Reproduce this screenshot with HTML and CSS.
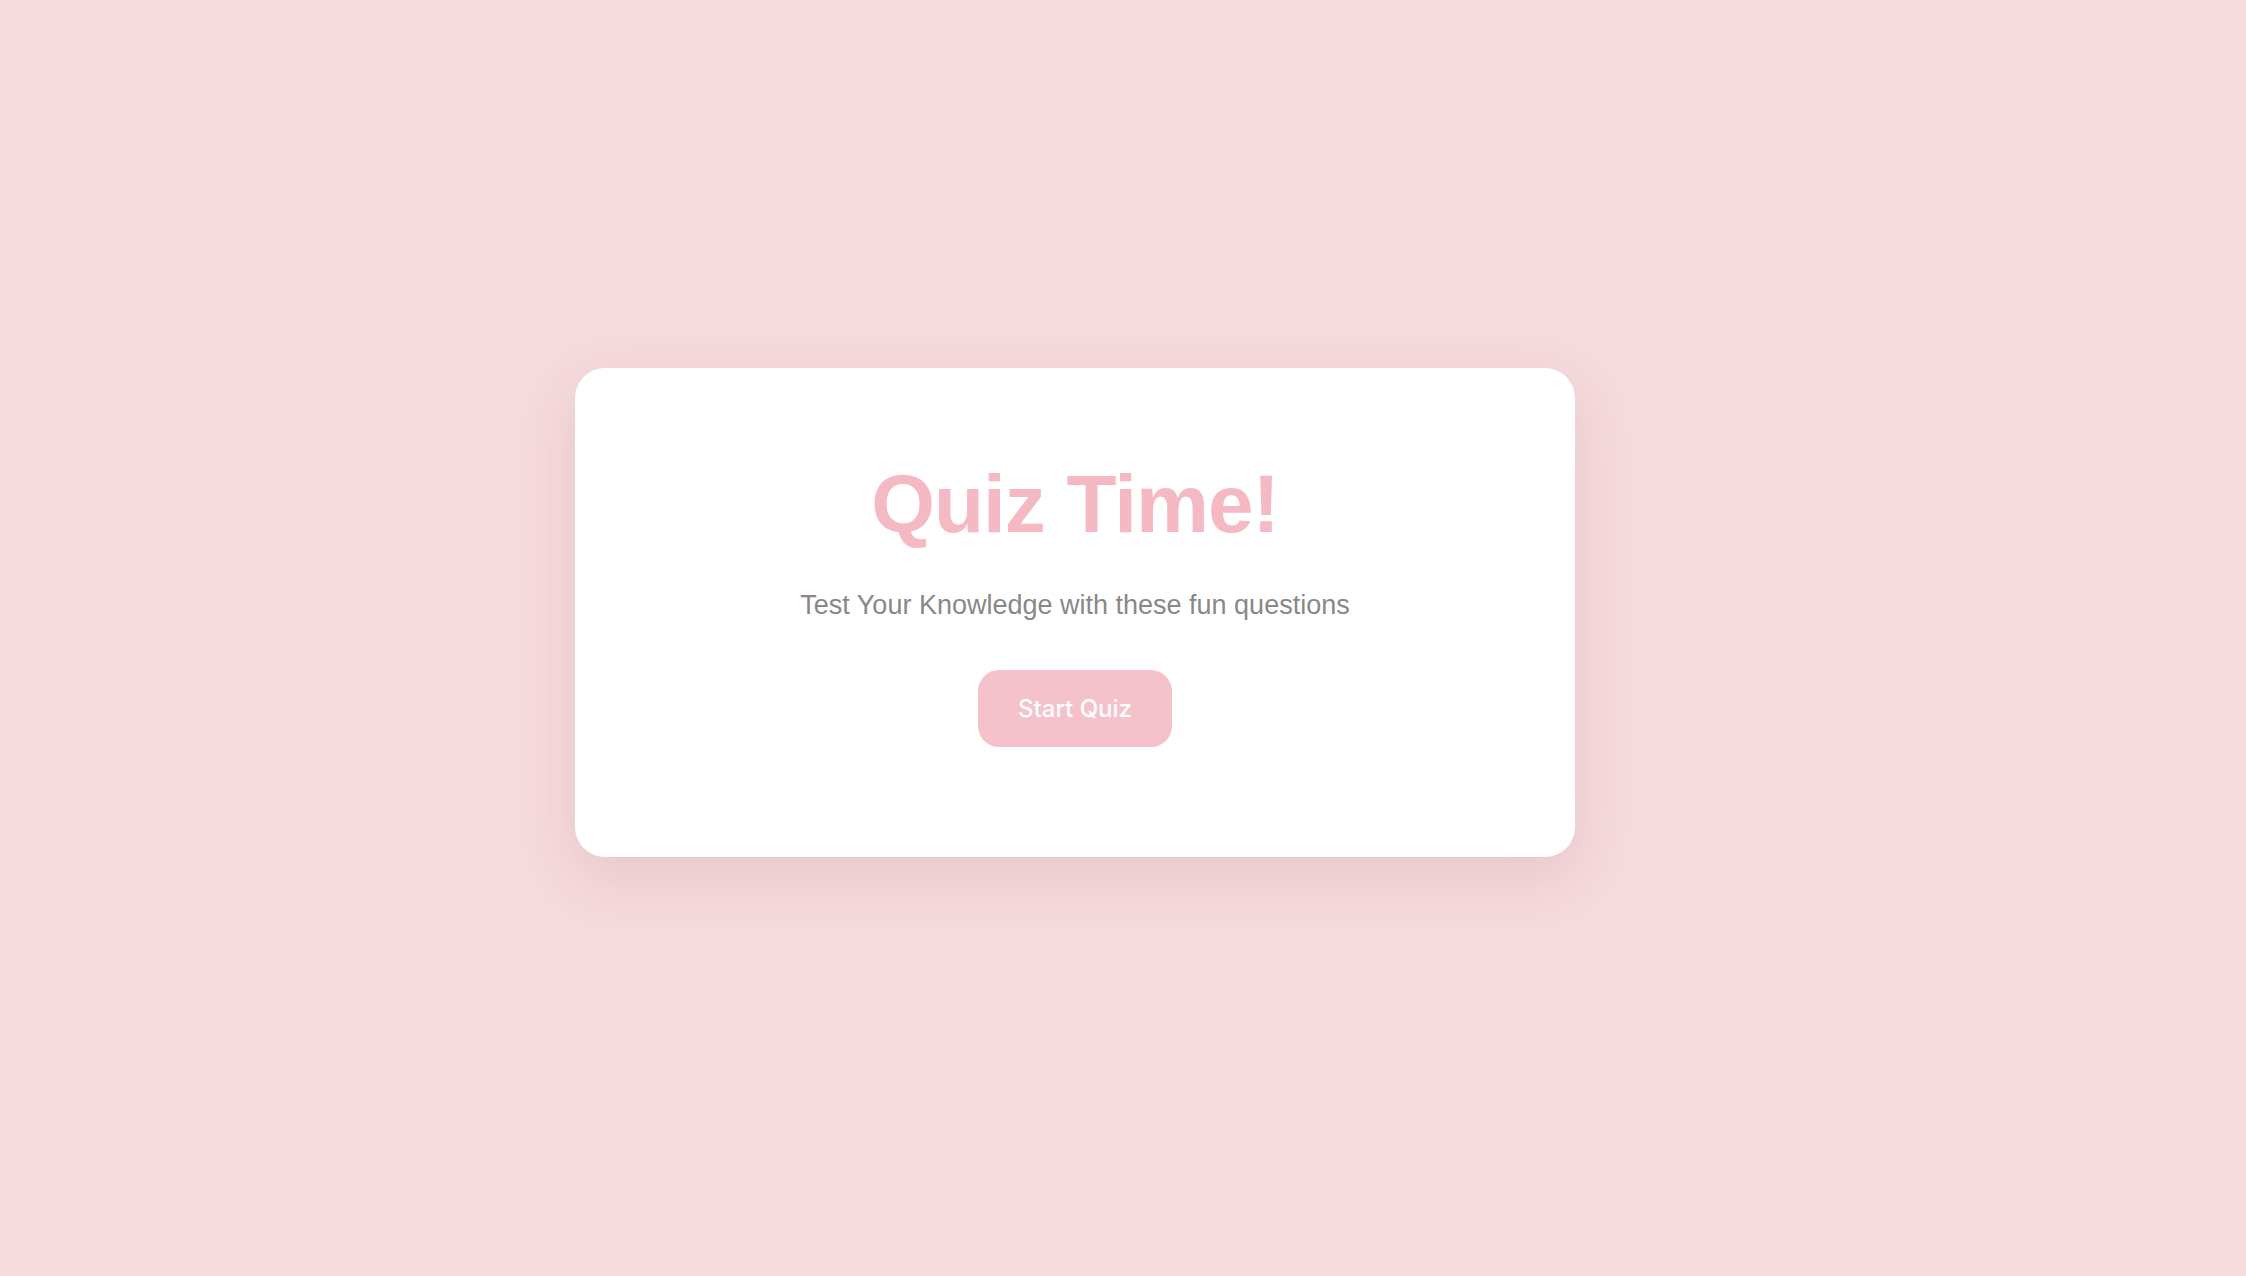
FILE: index.html
```html
<!DOCTYPE html>
<html lang="en">
<head>
<meta charset="utf-8">
<title>Quiz Time!</title>
<link rel="stylesheet" href="styles.css">
</head>
<body>
  <main class="stage">
    <section class="card">
      <h1 class="title">Quiz Time!</h1>
      <p class="subtitle">Test Your Knowledge with these fun questions</p>
      <button class="start-btn" type="button">Start Quiz</button>
    </section>
  </main>
</body>
</html>
```

FILE: styles.css
```css
html, body {
  margin: 0;
  padding: 0;
}

body {
  background: #f6dadd;
  font-family: "Liberation Sans", Arial, Helvetica, sans-serif;
}

.stage {
  box-sizing: border-box;
  min-height: 100vh;
  display: flex;
  align-items: center;
  justify-content: center;
  padding: 0 96px 51px 0;
}

.card {
  box-sizing: border-box;
  width: 1000px;
  height: 489px;
  background: #ffffff;
  border-radius: 30px;
  box-shadow: 0 20px 60px rgba(120, 60, 70, 0.12);
  padding: 90px 60px 0;
  display: flex;
  flex-direction: column;
  align-items: center;
  text-align: center;
}

.title {
  margin: 0;
  font-size: 82px;
  line-height: 92px;
  font-weight: 700;
  color: #f4b9c2;
  letter-spacing: -1px;
}

.subtitle {
  margin: 35px 0 0;
  font-size: 27px;
  line-height: 40px;
  color: #888888;
}

.start-btn {
  margin-top: 45px;
  width: 194px;
  height: 77px;
  border: none;
  border-radius: 21px;
  background: #f5c1cb;
  color: #ffffff;
  font-family: Inter, "Noto Sans", sans-serif;
  font-size: 24px;
  font-weight: 500;
  cursor: pointer;
}
```
